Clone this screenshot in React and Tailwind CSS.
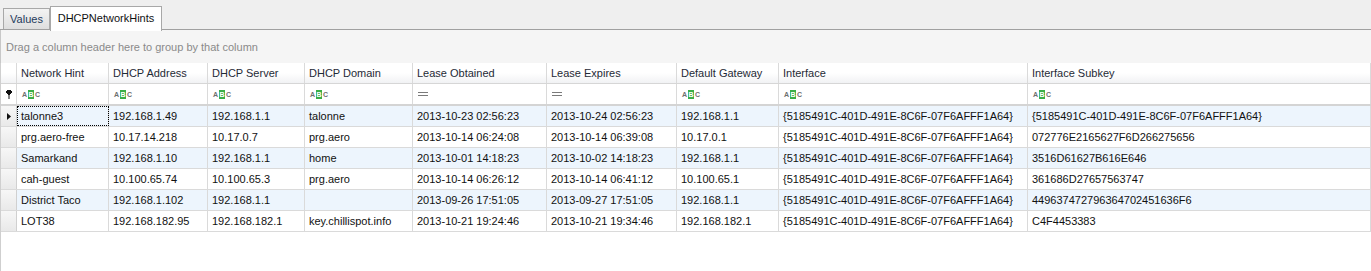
import React from 'react';

const GUID = '{5185491C-401D-491E-8C6F-07F6AFFF1A64}';

const columns = [
  { key: 'hint', label: 'Network Hint', w: 'w-[92px]', filter: 'abc' },
  { key: 'addr', label: 'DHCP Address', w: 'w-[99px]', filter: 'abc' },
  { key: 'server', label: 'DHCP Server', w: 'w-[97px]', filter: 'abc' },
  { key: 'domain', label: 'DHCP Domain', w: 'w-[108px]', filter: 'abc' },
  { key: 'obtained', label: 'Lease Obtained', w: 'w-[134px]', filter: 'eq' },
  { key: 'expires', label: 'Lease Expires', w: 'w-[130px]', filter: 'eq' },
  { key: 'gateway', label: 'Default Gateway', w: 'w-[102px]', filter: 'abc' },
  { key: 'iface', label: 'Interface', w: 'w-[249px]', filter: 'abc' },
  { key: 'subkey', label: 'Interface Subkey', w: 'flex-1', filter: 'abc' },
];

const rows = [
  ['talonne3', '192.168.1.49', '192.168.1.1', 'talonne', '2013-10-23 02:56:23', '2013-10-24 02:56:23', '192.168.1.1', GUID, GUID],
  ['prg.aero-free', '10.17.14.218', '10.17.0.7', 'prg.aero', '2013-10-14 06:24:08', '2013-10-14 06:39:08', '10.17.0.1', GUID, '072776E2165627F6D266275656'],
  ['Samarkand', '192.168.1.10', '192.168.1.1', 'home', '2013-10-01 14:18:23', '2013-10-02 14:18:23', '192.168.1.1', GUID, '3516D61627B616E646'],
  ['cah-guest', '10.100.65.74', '10.100.65.3', 'prg.aero', '2013-10-14 06:26:12', '2013-10-14 06:41:12', '10.100.65.1', GUID, '361686D27657563747'],
  ['District Taco', '192.168.1.102', '192.168.1.1', '', '2013-09-26 17:51:05', '2013-09-27 17:51:05', '192.168.1.1', GUID, '449637472796364702451636F6'],
  ['LOT38', '192.168.182.95', '192.168.182.1', 'key.chillispot.info', '2013-10-21 19:24:46', '2013-10-21 19:34:46', '192.168.182.1', GUID, 'C4F4453383'],
];

const AbcIcon = () => (
  <div className="flex items-center gap-[1px] text-[7px] font-bold leading-none">
    <span className="text-[#6f6f6f]">A</span>
    <span className="flex h-[9px] w-[6px] items-center justify-center bg-[#3aae47] text-white">B</span>
    <span className="text-[#6f6f6f]">C</span>
  </div>
);

const EqIcon = () => (
  <svg width="10" height="5" viewBox="0 0 10 5">
    <rect x="0" y="0" width="10" height="1" fill="#7a7a7a" />
    <rect x="0" y="3" width="10" height="1" fill="#7a7a7a" />
  </svg>
);

const PinIcon = () => (
  <svg width="6" height="9" viewBox="0 0 6 9">
    <rect x="1" y="0" width="4" height="4" fill="#111" />
    <rect x="0" y="1" width="6" height="2" fill="#111" />
    <rect x="2" y="4" width="2" height="1" fill="#111" />
    <rect x="2.5" y="4" width="1" height="5" fill="#111" />
  </svg>
);

const App = () => {
  return (
    <div className="h-[271px] w-[1371px] overflow-hidden bg-white font-['Liberation_Sans',Arial,sans-serif] text-[11px]">
      {/* tab strip */}
      <div className="flex h-[30px] items-end border-b border-[#a0a0a0] bg-[#efefef] pl-[3px]">
        <div className="flex h-[21px] w-[47px] items-center justify-center border border-b-0 border-[#a8a8a8] bg-gradient-to-b from-[#f3f3f3] to-[#dedede] text-[#1e395b]">
          Values
        </div>
        <div className="relative -mb-[2px] flex h-[25px] w-[112px] items-center justify-center border border-b-0 border-[#a8a8a8] bg-white pb-[2px] text-[#111]">
          DHCPNetworkHints
        </div>
      </div>

      {/* group panel */}
      <div className="flex h-[33px] items-center border-l border-[#c8c8c8] bg-[#f5f5f5] pl-[5px] pt-[2px] text-[#8a8a8a]">
        Drag a column header here to group by that column
      </div>

      <div className="border-l border-[#cfcfcf]">
        {/* header */}
        <div className="flex h-[21px] border-b border-[#d6d6d6] bg-gradient-to-b from-white from-50% to-[#f1f2f4] text-[#1f2a36]">
          <div className="w-[16px] shrink-0 border-r border-[#dadada]" />
          {columns.map((c) => (
            <div key={c.key} className={`${c.w} flex shrink-0 items-center border-r border-[#dadada] pl-[4px]`}>
              {c.label}
            </div>
          ))}
        </div>

        {/* filter row */}
        <div className="flex h-[22px] border-b-2 border-[#d4d4d4] bg-white">
          <div className="flex w-[16px] shrink-0 items-center justify-center border-r border-[#dadada]">
            <PinIcon />
          </div>
          {columns.map((c) => (
            <div key={c.key} className={`${c.w} flex shrink-0 items-center border-r border-[#dadada] pl-[5px]`}>
              {c.filter === 'abc' ? <AbcIcon /> : <EqIcon />}
            </div>
          ))}
        </div>

        {/* data rows */}
        {rows.map((r, i) => (
          <div key={i} className={`flex h-[21px] border-b border-[#dadada] text-[#111] ${i % 2 === 0 ? 'bg-[#edf5fd]' : 'bg-white'}`}>
            <div className="flex w-[16px] shrink-0 items-center justify-center border-r border-[#d0d0d0] bg-gradient-to-b from-[#f7f7f7] to-[#e9e9e9]">
              {i === 0 && (
                <svg width="4" height="7" viewBox="0 0 4 7">
                  <path d="M0 0 L4 3.5 L0 7 Z" fill="#111" />
                </svg>
              )}
            </div>
            {columns.map((c, j) => (
              <div
                key={c.key}
                className={`${c.w} flex shrink-0 items-center whitespace-nowrap border-r border-[#dadada] pl-[4px] ${
                  i === 0 && j === 0 ? 'outline-1 -outline-offset-1 outline-dotted outline-black' : ''
                }`}
              >
                {r[j]}
              </div>
            ))}
          </div>
        ))}
        <div className="h-[40px]" />
      </div>
    </div>
  );
};

export default App;
